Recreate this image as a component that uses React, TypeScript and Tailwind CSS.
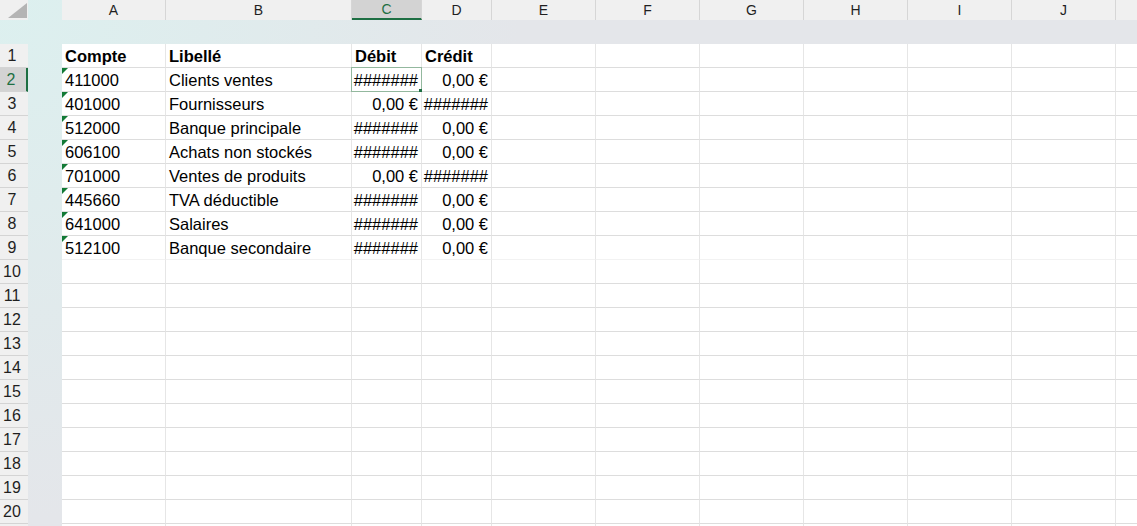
const columns = ["A", "B", "C", "D", "E", "F", "G", "H", "I", "J", "K"];

type Row = [string, string, string, string];

const rows: Row[] = [
  ["Compte", "Libellé", "Débit", "Crédit"],
  ["411000", "Clients ventes", "#######", "0,00 €"],
  ["401000", "Fournisseurs", "0,00 €", "#######"],
  ["512000", "Banque principale", "#######", "0,00 €"],
  ["606100", "Achats non stockés", "#######", "0,00 €"],
  ["701000", "Ventes de produits", "0,00 €", "#######"],
  ["445660", "TVA déductible", "#######", "0,00 €"],
  ["641000", "Salaires", "#######", "0,00 €"],
  ["512100", "Banque secondaire", "#######", "0,00 €"],
];

// row 21 only peeks in by a couple of pixels, so it gets no number
const ROW_COUNT = 21;

function CornerCell() {
  return (
    <div className="flex items-end justify-end bg-[#f0f0f0] pb-[2px] pr-[1px]">
      <svg width="19" height="15" viewBox="0 0 19 15">
        <polygon points="0,15 19,15 19,0" fill="#b4b4b4" />
      </svg>
    </div>
  );
}

function ColumnHeader({ letter }: { letter: string }) {
  const selected = letter === "C";
  const last = letter === "K";
  return (
    <div
      className={
        "flex items-center justify-center text-[14px] " +
        (last ? "" : "border-r border-[#d6d6d6] ") +
        (selected
          ? "border-b-2 border-b-[#1e6f43] bg-[#d3d3d3] text-[#1e6f43]"
          : "bg-[#f0f0f0] text-[#1f1f1f]")
      }
    >
      {last ? "" : letter}
    </div>
  );
}

function RowHeader({ n }: { n: number }) {
  const selected = n === 2;
  return (
    <div
      className={
        "flex items-center justify-center border-b border-[#d4d4d4] pr-[4px] pt-[1px] text-[16px] " +
        (selected
          ? "border-r-2 border-r-[#1e6f43] bg-[#d3d3d3] text-[#1e6f43]"
          : "bg-[#f0f0f0] text-[#1f1f1f]")
      }
    >
      {n < ROW_COUNT ? n : ""}
    </div>
  );
}

function Cell({
  row,
  col,
  value,
}: {
  row: number;
  col: number;
  value?: string;
}) {
  const right = row > 1 && (col === 2 || col === 3);
  const bold = row === 1 && value;
  const flag = row > 1 && col === 0 && value;
  const active = row === 2 && col === 2;
  const last = col === columns.length - 1;
  const bottom = row === 9 ? "border-[#f2f2f2]" : "border-[#dddddd]";
  return (
    <div
      className={
        "relative flex items-center whitespace-nowrap bg-white pt-[2px] text-[16.5px] text-black " +
        "border-b " +
        bottom +
        (last ? "" : " border-r border-r-[#e6e6e6]") +
        (right ? " justify-end pr-[3px]" : " pl-[3px]") +
        (bold ? " font-bold" : "")
      }
    >
      {flag && (
        <svg
          className="absolute left-0 top-0"
          width="6"
          height="6"
          viewBox="0 0 6 6"
        >
          <polygon points="0,0 6,0 0,6" fill="#127a36" />
        </svg>
      )}
      {value}
      {active && (
        <div className="absolute -left-px -top-px h-[25px] w-[71px] border border-[#93b89e]">
          <div className="absolute -bottom-[2px] -right-[2px] h-[4px] w-[4px] bg-[#1e6f43]" />
        </div>
      )}
    </div>
  );
}

export default function App() {
  const body = [];
  for (let r = 1; r <= ROW_COUNT; r++) {
    const data = rows[r - 1];
    body.push(<RowHeader key={"h" + r} n={r} />);
    body.push(<div key={"g" + r} />);
    columns.forEach((_, c) => {
      body.push(
        <Cell key={r + "-" + c} row={r} col={c} value={data ? data[c] : undefined} />
      );
    });
  }

  return (
    <div className="h-[526px] w-[1137px] overflow-hidden bg-[radial-gradient(circle_at_0_0,#dcf0ef_0px,#e4e6ea_520px)] font-['Liberation_Sans',Arial,sans-serif]">
      <div className="grid grid-cols-[28px_34px_104px_186px_70px_70px_104px_104px_104px_104px_104px_104px_1fr] grid-rows-[20px_24px_repeat(21,24px)]">
        <CornerCell />
        <div />
        {columns.map((l) => (
          <ColumnHeader key={l} letter={l} />
        ))}
        <div className="col-span-13" />
        {body}
      </div>
    </div>
  );
}
